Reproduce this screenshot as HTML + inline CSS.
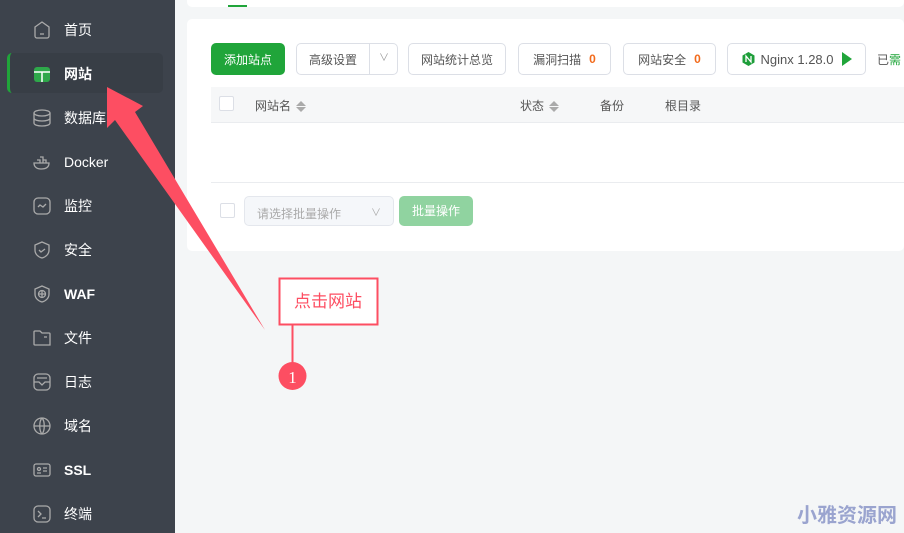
<!DOCTYPE html><html><head><meta charset="utf-8"><style>
*{margin:0;padding:0;box-sizing:border-box}
body{width:904px;height:533px;overflow:hidden;background:#f4f6f7;font-family:"Liberation Sans","Noto Sans CJK SC",sans-serif;position:relative}
.sb{position:absolute;left:0;top:0;width:175px;height:533px;background:#3d434c}
.it{position:absolute;left:32px;height:20px;display:flex;align-items:center;color:#fff;font-size:14px}
.it svg{width:20px;height:20px;margin-right:12px}
.act{position:absolute;left:7px;top:53px;width:156px;height:40px;background:#383e46;border-radius:5px;border-left:3px solid #20a53a}
.card{position:absolute;background:#fff;border-radius:5px}
.btn{position:absolute;top:43px;height:32px;border:1px solid #dcdfe6;border-radius:5px;background:#fff;font-size:12px;color:#555;display:flex;align-items:center;justify-content:center}
.o{color:#f26a1b;font-weight:bold;margin-left:8px}
.cb{position:absolute;width:15px;height:15px;border:1px solid #dcdfe6;border-radius:2px;background:#fff}
.th{position:absolute;top:97px;font-size:12px;color:#555}
.s{display:inline-block;vertical-align:middle;margin-left:5px;width:0;height:11px;position:relative}
.s:before,.s:after{content:"";position:absolute;left:0;border-left:5px solid transparent;border-right:5px solid transparent}
.s:before{top:0;border-bottom:5px solid #aaa}.s:after{top:6px;border-top:5px solid #aaa}
</style></head><body>
<div class="sb">
<div class="act"></div>
<div class="it" style="top:20px"><svg viewBox="0 0 20 20" fill="none" stroke="#aaa" stroke-width="1.3"><path d="M3 7l7-5 7 5v9a2 2 0 0 1-2 2H5a2 2 0 0 1-2-2z"/><path d="M8 14h4"/></svg>首页</div>
<div class="it" style="top:64px;font-weight:bold"><svg viewBox="0 0 20 20"><rect x="2" y="3" width="16" height="15" rx="3" fill="#2ea84a"/><path d="M2 8h16M10 8v10" stroke="#fff" stroke-width="1.5"/></svg>网站</div>
<div class="it" style="top:108px"><svg viewBox="0 0 20 20" fill="none" stroke="#aaa" stroke-width="1.3"><ellipse cx="10" cy="5" rx="8" ry="3"/><path d="M2 5v10c0 2 4 3 8 3s8-1 8-3V5M2 10c0 2 4 3 8 3s8-1 8-3"/></svg>数据库</div>
<div class="it" style="top:152px"><svg viewBox="0 0 20 20" fill="none" stroke="#aaa" stroke-width="1.3"><path d="M2 11h15c0 4-3 6-8 6-4 0-7-2-7-6zM5 8h3v3M8 5h3v6M11 8h3v3"/></svg>Docker</div>
<div class="it" style="top:196px"><svg viewBox="0 0 20 20" fill="none" stroke="#aaa" stroke-width="1.3"><rect x="2" y="2" width="16" height="16" rx="4"/><path d="M6 11l2-2 3 2 3-3"/></svg>监控</div>
<div class="it" style="top:240px"><svg viewBox="0 0 20 20" fill="none" stroke="#aaa" stroke-width="1.3"><path d="M10 2l7 3v5c0 4-3 7-7 8-4-1-7-4-7-8V5z"/><path d="M7 10l2 2 4-3"/></svg>安全</div>
<div class="it" style="top:284px;font-weight:bold"><svg viewBox="0 0 20 20" fill="none" stroke="#aaa" stroke-width="1.3"><path d="M10 2l7 3v5c0 4-3 7-7 8-4-1-7-4-7-8V5z"/><circle cx="10" cy="10" r="3.5"/><path d="M6.5 10h7M10 6.5v7"/></svg>WAF</div>
<div class="it" style="top:328px"><svg viewBox="0 0 20 20" fill="none" stroke="#aaa" stroke-width="1.3"><path d="M2 4a1 1 0 0 1 1-1h5l2 2h7a1 1 0 0 1 1 1v11H3a1 1 0 0 1-1-1z"/><path d="M12 9h3"/></svg>文件</div>
<div class="it" style="top:372px"><svg viewBox="0 0 20 20" fill="none" stroke="#aaa" stroke-width="1.3"><rect x="2" y="2" width="16" height="16" rx="4"/><path d="M5 6h10M2 10h5l3 3 3-3h5"/></svg>日志</div>
<div class="it" style="top:416px"><svg viewBox="0 0 20 20" fill="none" stroke="#aaa" stroke-width="1.3"><circle cx="10" cy="10" r="8"/><path d="M2 10h16M10 2c-3 3-3 13 0 16M10 2c3 3 3 13 0 16"/></svg>域名</div>
<div class="it" style="top:460px;font-weight:bold"><svg viewBox="0 0 20 20" fill="none" stroke="#aaa" stroke-width="1.3"><rect x="2" y="4" width="16" height="12" rx="2"/><circle cx="7" cy="9" r="1.5"/><path d="M5 13h4M11 8h4M11 11h4"/></svg>SSL</div>
<div class="it" style="top:504px"><svg viewBox="0 0 20 20" fill="none" stroke="#aaa" stroke-width="1.3"><rect x="2" y="2" width="16" height="16" rx="4"/><path d="M6 7l3 3-3 3M10 14h4"/></svg>终端</div>
</div>
<div class="card" style="left:187px;top:-5px;width:717px;height:12px;border-radius:0 0 5px 5px"></div>
<div style="position:absolute;left:228px;top:5px;width:19px;height:2px;background:#20a53a"></div>
<div class="card" style="left:187px;top:19px;width:717px;height:232px"></div>
<div class="btn" style="left:211px;width:74px;background:#20a53a;border-color:#20a53a;color:#fff">添加站点</div>
<div class="btn" style="left:296px;width:102px;justify-content:flex-start;padding-left:12px">高级设置<span style="position:absolute;left:72px;top:0;bottom:0;border-left:1px solid #dcdfe6;width:29px;text-align:center;line-height:30px;color:#999;font-size:10px">∨</span></div>
<div class="btn" style="left:408px;width:98px">网站统计总览</div>
<div class="btn" style="left:518px;width:93px">漏洞扫描<span class="o">0</span></div>
<div class="btn" style="left:623px;width:93px">网站安全<span class="o">0</span></div>
<div class="btn" style="left:727px;width:139px;font-size:13px"><svg width="13" height="14" viewBox="0 0 13 14" style="margin-right:6px"><path d="M6.5 0l6 3.5v7L6.5 14 .5 10.5v-7z" fill="#1e9e3a"/><path d="M4 10V4l5 6V4" stroke="#fff" stroke-width="1.3" fill="none"/></svg>Nginx 1.28.0<svg width="10" height="14" style="margin-left:8px"><path d="M0 0l10 7-10 7z" fill="#20a53a"/></svg></div>
<div style="position:absolute;left:877px;top:51px;font-size:12px;color:#555">已<span style="color:#20a53a">需</span></div>
<div style="position:absolute;left:211px;top:87px;width:693px;height:36px;background:#f6f7f8;border-bottom:1px solid #eaecef"></div>
<div class="cb" style="left:219px;top:96px"></div>
<div class="th" style="left:255px">网站名<span class="s"></span></div>
<div class="th" style="left:520px">状态<span class="s"></span></div>
<div class="th" style="left:600px">备份</div>
<div class="th" style="left:665px">根目录</div>
<div style="position:absolute;left:211px;top:182px;width:693px;height:1px;background:#eaecef"></div>
<div class="cb" style="left:220px;top:203px"></div>
<div style="position:absolute;left:244px;top:196px;width:150px;height:30px;border:1px solid #e4e7ed;border-radius:5px;background:#f5f7fa;font-size:12px;color:#aaa;padding:8px 0 0 12px">请选择批量操作<span style="position:absolute;right:12px;top:7px;font-size:10px">∨</span></div>
<div style="position:absolute;left:399px;top:196px;width:74px;height:30px;border-radius:5px;background:#90d3a0;color:#fff;font-size:12px;text-align:center;line-height:30px">批量操作</div>
<svg style="position:absolute;left:0;top:0" width="904" height="533">
<path d="M107 87L143 106 135 112 265 330 115 120 107 128Z" fill="#fd4e62"/>
<rect x="279.5" y="278.5" width="98" height="46" fill="#fff" stroke="#fd4e62" stroke-width="2"/>
<text x="328" y="307" text-anchor="middle" font-size="17" fill="#fd4e62" font-family="Liberation Sans,Noto Sans CJK SC,sans-serif">点击网站</text>
<path d="M292.5 325v40" stroke="#fd4e62" stroke-width="2"/>
<circle cx="292.5" cy="376" r="14" fill="#fd4e62"/>
<text x="292.5" y="383" text-anchor="middle" font-size="17" fill="#fff" font-family="Liberation Serif,serif">1</text>
<text x="847" y="522" text-anchor="middle" font-size="20" font-weight="bold" fill="#9aa4cf" font-family="Liberation Sans,Noto Sans CJK SC,sans-serif">小雅资源网</text>
</svg>
</body></html>
